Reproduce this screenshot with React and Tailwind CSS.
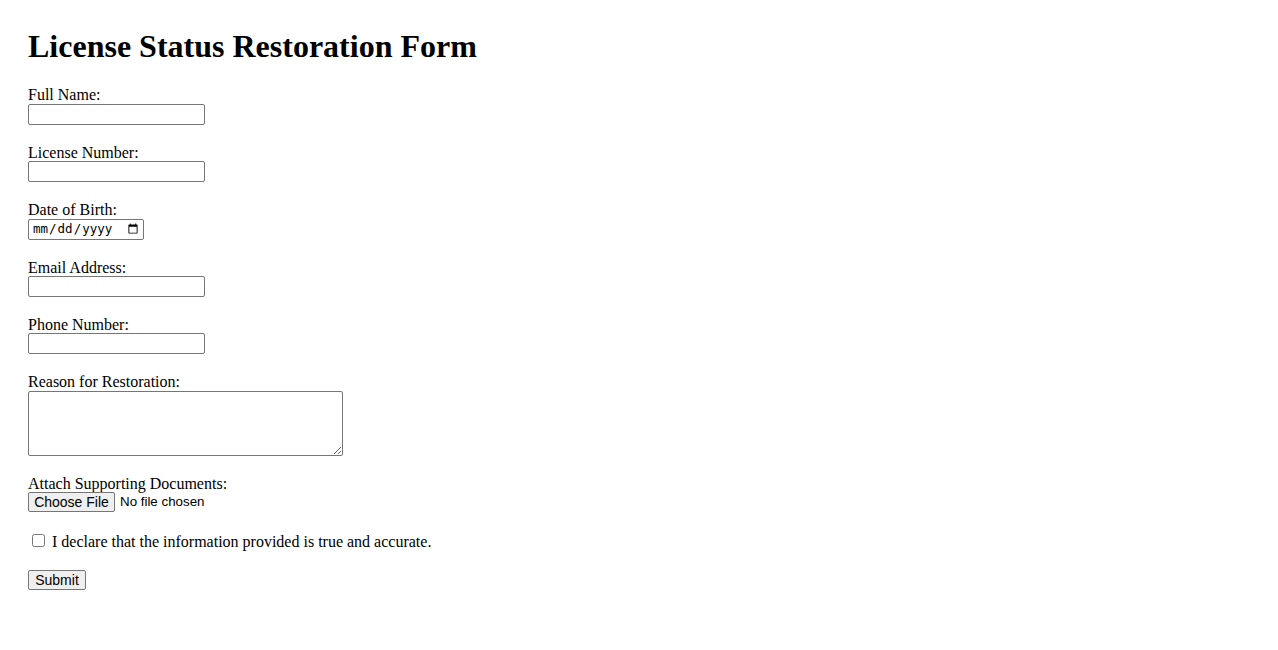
import React from "react";

function Field({ label, children }) {
  return (
    <div className="flex flex-col items-start mb-[18px]">
      <label className="block pt-[1px] leading-[17.4px]">{label}</label>
      {children}
    </div>
  );
}

export default function App() {
  const inputCls =
    "block w-[177px] h-[21px] border border-[#767676] rounded-[2px] bg-white px-[2px] text-[13.33px] font-['Liberation_Sans',Arial,sans-serif]";
  return (
    <div className="min-h-[650px] bg-white text-black pt-[28px] px-[28px] font-['Liberation_Serif','Times_New_Roman',serif] text-[16px]">
      <h1 className="text-[32px] font-bold leading-[36.8px] mb-[20.5px]">
        License Status Restoration Form
      </h1>
      <form onSubmit={(e) => e.preventDefault()} className="flex flex-col items-start">
        <Field label="Full Name:">
          <input type="text" className={inputCls} />
        </Field>
        <Field label="License Number:">
          <input type="text" className={inputCls} />
        </Field>
        <Field label="Date of Birth:">
          <input
            type="date"
            className="block w-[116px] h-[21px] border border-[#767676] rounded-[2px] bg-white pl-[3px] pr-[2px] text-[12.5px] text-black font-['DejaVu_Sans_Mono',monospace]"
          />
        </Field>
        <Field label="Email Address:">
          <input type="email" className={inputCls} />
        </Field>
        <Field label="Phone Number:">
          <input type="tel" className={inputCls} />
        </Field>
        <Field label="Reason for Restoration:">
          <textarea className="block w-[315px] h-[65px] border border-[#767676] rounded-[2px] bg-white p-[2px] text-[13.33px] font-['DejaVu_Sans_Mono',monospace]" />
        </Field>
        <div className="flex flex-col items-start mb-[19.4px]">
          <label className="block pt-[1px] leading-[17.4px]">Attach Supporting Documents:</label>
          <div className="flex items-center h-[20px] mt-[0.2px]">
            <button
              type="button"
              className="h-[20px] w-[87px] border border-[#767676] rounded-[2px] bg-[#efefef] text-[14px] text-black leading-[16px] font-['Liberation_Sans',Arial,sans-serif]"
            >
              Choose File
            </button>
            <span className="ml-[5px] text-[13.33px] font-['Liberation_Sans',Arial,sans-serif]">
              No file chosen
            </span>
          </div>
        </div>
        <div className="flex items-start mb-[19.9px] pt-[1px] leading-[17.4px]">
          <input
            type="checkbox"
            className="m-0 mt-[1.6px] ml-[4px] mr-[7px] w-[13px] h-[13px]"
          />
          <span>I declare that the information provided is true and accurate.</span>
        </div>
        <button
          type="submit"
          className="h-[20px] w-[58px] border border-[#767676] rounded-[2px] bg-[#efefef] text-[14px] text-black leading-[16px] font-['Liberation_Sans',Arial,sans-serif]"
        >
          Submit
        </button>
      </form>
    </div>
  );
}
